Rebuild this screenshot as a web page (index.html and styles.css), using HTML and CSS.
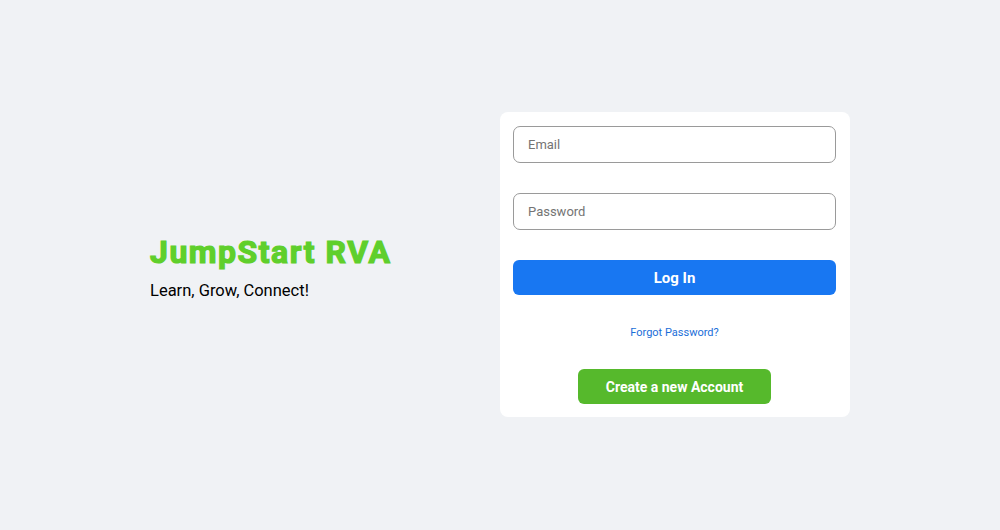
FILE: index.html
```html
<!DOCTYPE html>
<html>
<head>
<meta charset="utf-8">
<link rel="stylesheet" href="styles.css">
</head>
<body>
<main class="page">
  <section class="brand">
    <h1 class="brand-title">JumpStart RVA</h1>
    <p class="brand-tagline">Learn, Grow, Connect!</p>
  </section>
  <form class="card">
    <input class="field" type="text" placeholder="Email">
    <input class="field field-gap" type="password" placeholder="Password">
    <button class="btn-login" type="button">Log In</button>
    <a class="forgot" href="#">Forgot Password?</a>
    <button class="btn-create" type="button">Create a new Account</button>
  </form>
</main>
</body>
</html>
```

FILE: styles.css
```css
* { box-sizing: border-box; }
html, body { margin: 0; padding: 0; }
body {
  background: #f0f2f5;
  font-family: Roboto, "Liberation Sans", sans-serif;
}
.page {
  height: 530px;
  display: flex;
  align-items: center;
  padding-left: 150px;
  padding-bottom: 1px;
}
.brand {
  width: 350px;
  padding-top: 5px;
}
.brand-title {
  margin: 0;
  font-size: 32px;
  line-height: 38px;
  font-weight: 700;
  letter-spacing: 1.5px;
  -webkit-text-stroke: 1.2px #5fcf2b;
  color: #5fcf2b;
}
.brand-tagline {
  margin: 9px 0 0;
  font-size: 16.5px;
  line-height: 22px;
  color: #000;
}
.card {
  width: 350px;
  background: #fff;
  border-radius: 8px;
  padding: 14px 14px 13px 13px;
  display: flex;
  flex-direction: column;
  align-items: center;
}
.field {
  width: 323px;
  height: 37px;
  border: 1px solid #9a9a9a;
  border-radius: 7px;
  padding: 0 14px;
  font-family: Roboto, "Liberation Sans", sans-serif;
  font-size: 13px;
  color: #1c1e21;
  outline: none;
}
.field::placeholder { color: #747474; }
.field-gap { margin-top: 30px; }
.btn-login {
  margin-top: 30px;
  width: 323px;
  height: 35px;
  border: none;
  border-radius: 6px;
  background: #1877f2;
  color: #fff;
  font-family: Roboto, "Liberation Sans", sans-serif;
  font-size: 15px;
  font-weight: 700;
}
.forgot {
  margin-top: 31px;
  line-height: 14px;
  font-size: 11px;
  color: #1a6ed8;
  text-decoration: none;
}
.btn-create {
  margin-top: 29px;
  width: 193px;
  height: 35px;
  border: none;
  border-radius: 6px;
  background: #56b92c;
  color: #fff;
  font-family: Roboto, "Liberation Sans", sans-serif;
  font-size: 14px;
  font-weight: 700;
}
```
